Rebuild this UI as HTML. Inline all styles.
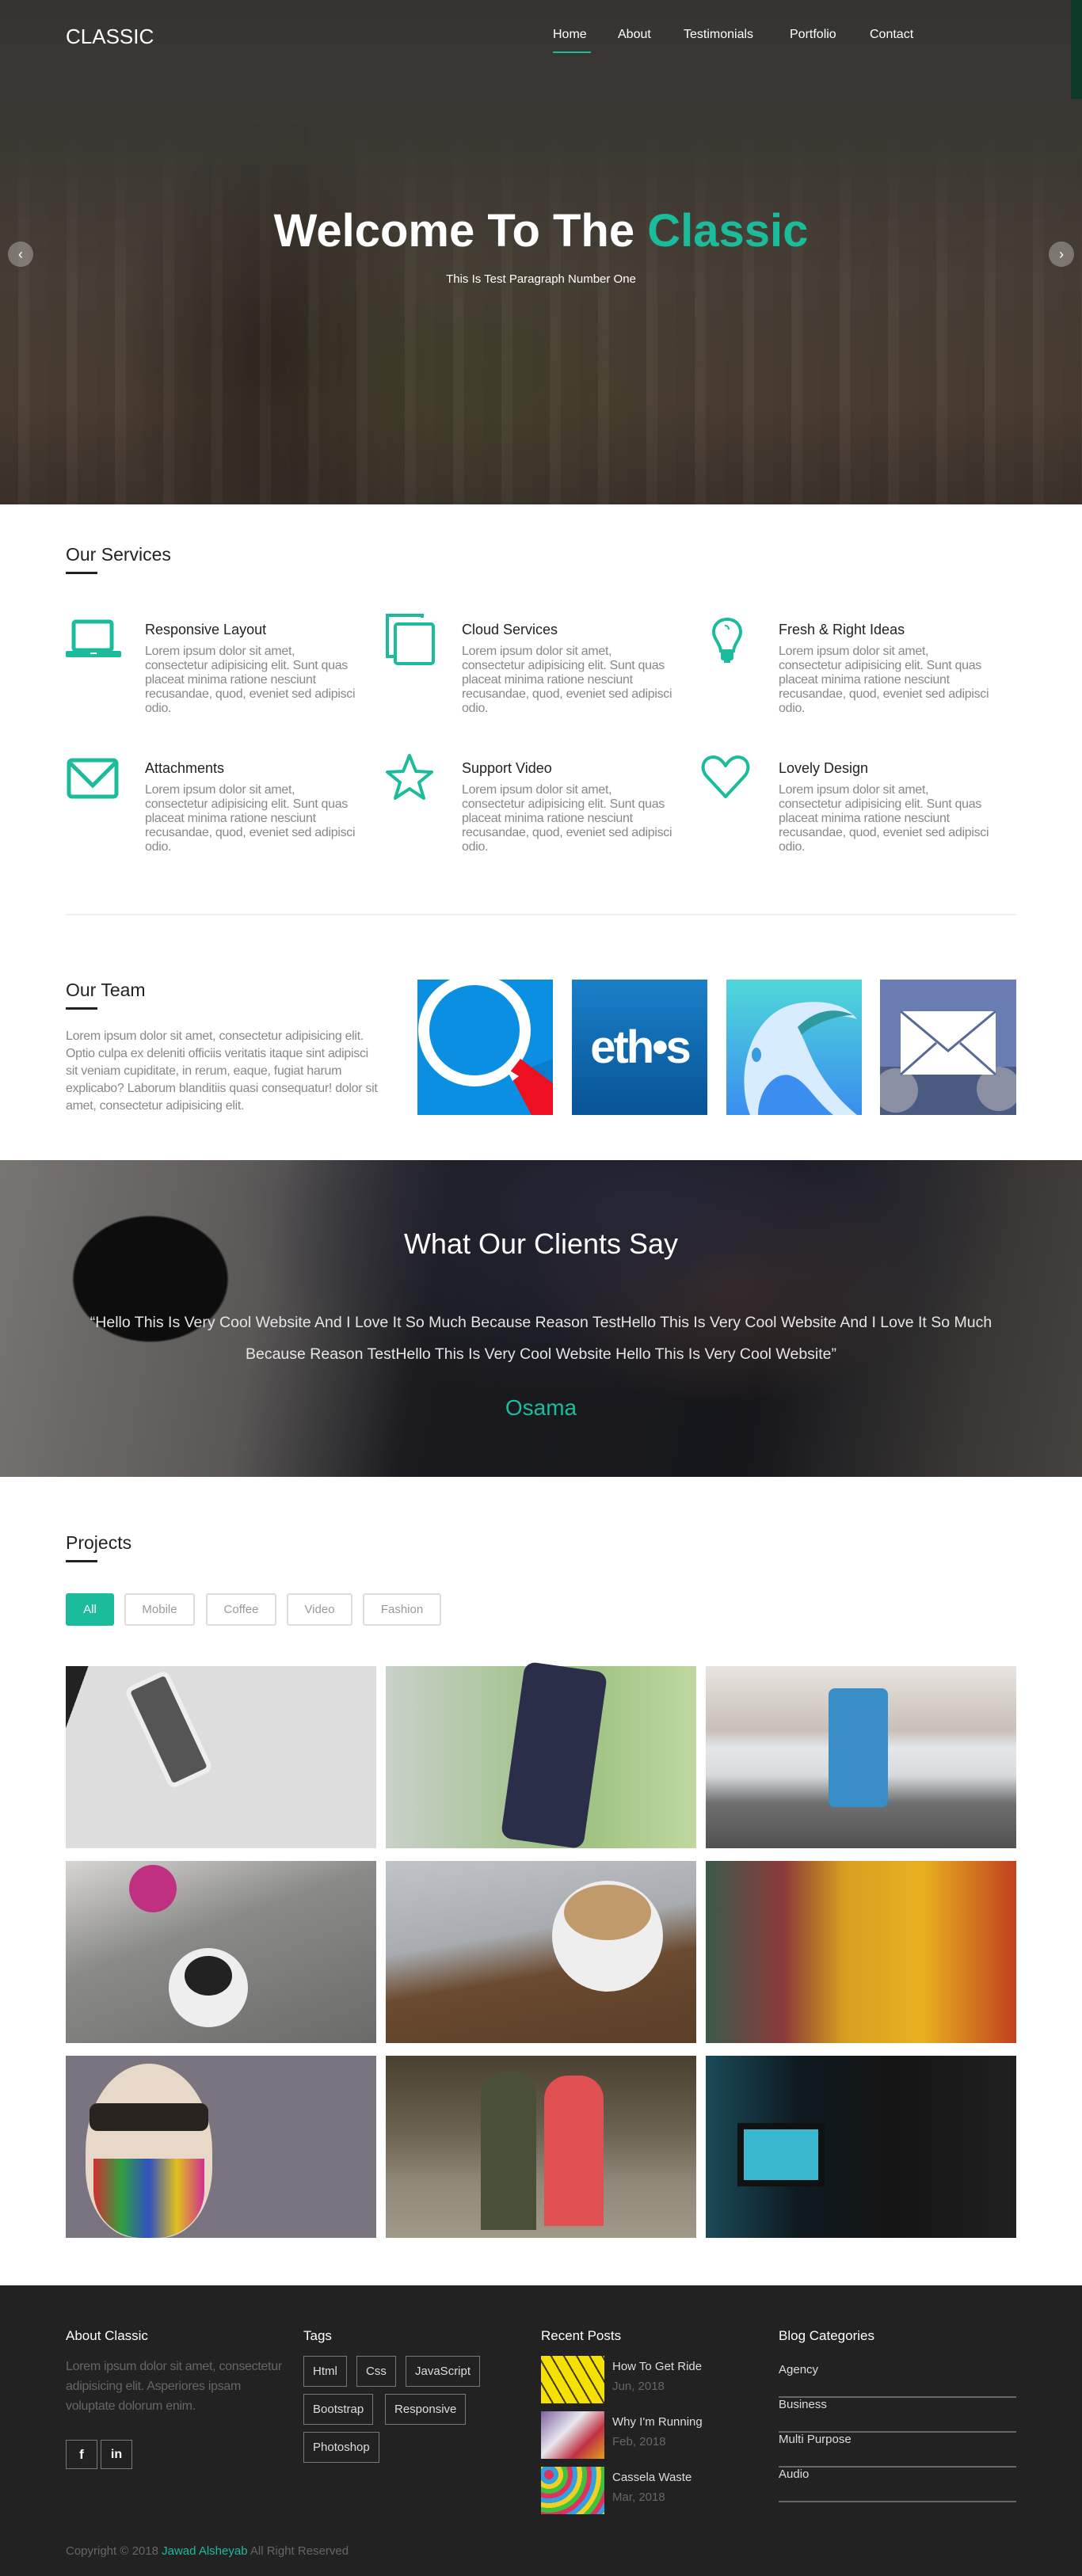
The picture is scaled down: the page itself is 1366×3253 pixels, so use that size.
<!DOCTYPE html>
<html><head><meta charset="utf-8">
<style>
*{margin:0;padding:0;box-sizing:border-box}
body{width:1366px;height:3253px;font-family:"Liberation Sans",Arial,sans-serif;background:#fff;position:relative;overflow:hidden}
.a{position:absolute}
.g{color:#1abc9c}
.hero{left:0;top:0;width:1366px;height:637px;background:
radial-gradient(ellipse 300px 200px at 600px 480px,rgba(60,70,40,.5),transparent),
radial-gradient(ellipse 200px 300px at 350px 450px,rgba(20,15,10,.5),transparent),
linear-gradient(180deg,#353432 0%,#3a3833 25%,#4a4137 55%,#4d3f33 80%,#3e342c 100%);}
.hero:after{content:"";position:absolute;left:0;right:0;top:0;bottom:0;background:repeating-linear-gradient(90deg,rgba(0,0,0,.08) 0 23px,rgba(255,255,255,.02) 23px 37px,rgba(0,0,0,.05) 37px 61px);-webkit-mask-image:linear-gradient(180deg,transparent 0,transparent 150px,#000 400px);mask-image:linear-gradient(180deg,transparent 0,transparent 150px,#000 400px)}
.nav{font-size:16px;color:#fff;top:35px}
.sh{font-size:23px;color:#222}
.ul{height:3px;width:40px;background:#222}
.st{font-size:18px;color:#222}
.sp{font-size:16px;color:#888;line-height:18px;width:330px;white-space:nowrap;letter-spacing:-.3px}
.btn{top:2012px;height:41px;border:2px solid #ddd;border-radius:3px;color:#999;font-size:15px;text-align:center;line-height:37px}
.im{width:392px;height:230px}
.fh{font-size:17px;color:#fff;top:2940px}
.tag{border:1px solid #777;color:#ddd;font-size:15px;height:39px;line-height:37px;padding:0 11px}
.cat{left:983px;width:300px;border-bottom:2px solid #666;color:#ddd;font-size:15px;height:44px}
</style></head><body>

<div class="a hero"></div>
<div class="a" style="left:1352px;top:0;width:14px;height:125px;background:#0e3a2a"></div>
<div class="a" style="left:83px;top:31px;font-size:26px;color:#fff">CLASSIC</div>
<div class="a nav g" style="left:698px">Home</div>
<div class="a" style="left:698px;top:65px;width:48px;height:2px;background:#1abc9c"></div>
<div class="a nav" style="left:780px">About</div>
<div class="a nav" style="left:863px">Testimonials</div>
<div class="a nav" style="left:997px">Portfolio</div>
<div class="a nav" style="left:1098px">Contact</div>
<div class="a" style="left:0;top:258px;width:1366px;text-align:center;font-size:58px;font-weight:bold;color:#fff">Welcome To The <span class="g">Classic</span></div>
<div class="a" style="left:0;top:344px;width:1366px;text-align:center;font-size:15px;color:#fff">This Is Test Paragraph Number One</div>
<div class="a" style="left:10px;top:305px;width:32px;height:32px;border-radius:50%;background:rgba(255,255,255,.3);color:#fff;text-align:center;line-height:32px;font-size:18px">‹</div>
<div class="a" style="left:1324px;top:305px;width:32px;height:32px;border-radius:50%;background:rgba(255,255,255,.3);color:#fff;text-align:center;line-height:32px;font-size:18px">›</div>

<div class="a sh" style="left:83px;top:687px">Our Services</div>
<div class="a ul" style="left:83px;top:722px"></div>

<svg class="a" style="left:83px;top:782px" width="70" height="50" viewBox="0 0 70 50"><rect x="10" y="3" width="48" height="36" rx="3" fill="none" stroke="#1abc9c" stroke-width="5"/><rect x="0" y="40" width="70" height="8" rx="2" fill="#1abc9c"/><rect x="31" y="42" width="8" height="2" fill="#fff"/></svg>
<svg class="a" style="left:485px;top:774px" width="66" height="66" viewBox="0 0 66 66"><path d="M48 6V3H4v52h8" fill="none" stroke="#1abc9c" stroke-width="4"/><rect x="14" y="14" width="48" height="50" rx="3" fill="none" stroke="#1abc9c" stroke-width="4"/></svg>
<svg class="a" style="left:898px;top:778px" width="40" height="62" viewBox="0 0 40 62"><path d="M20 4C9 4 3 12 3 20c0 9 8 14 9 24h16c1-10 9-15 9-24C37 12 31 4 20 4z" fill="none" stroke="#1abc9c" stroke-width="4"/><path d="M17 12c3 0 5 2 5 5" fill="none" stroke="#1abc9c" stroke-width="2"/><rect x="12" y="42" width="16" height="14" rx="3" fill="#1abc9c"/><rect x="16" y="55" width="8" height="4" fill="#1abc9c"/></svg>
<svg class="a" style="left:84px;top:957px" width="66" height="52" viewBox="0 0 66 52"><rect x="3" y="3" width="60" height="46" rx="4" fill="none" stroke="#1abc9c" stroke-width="5"/><path d="M5 7l28 28L61 7" fill="none" stroke="#1abc9c" stroke-width="5"/></svg>
<svg class="a" style="left:486px;top:950px" width="62" height="60" viewBox="0 0 62 60"><path d="M31 4l8 20 20 1-16 13 6 20-18-12-18 12 6-20L3 25l20-1z" fill="none" stroke="#1abc9c" stroke-width="4" stroke-linejoin="round"/></svg>
<svg class="a" style="left:884px;top:952px" width="64" height="58" viewBox="0 0 64 58"><path d="M32 54L8 28C0 19 3 5 16 4c8 0 13 6 16 11 3-5 8-11 16-11 13 1 16 15 8 24z" fill="none" stroke="#1abc9c" stroke-width="4" stroke-linejoin="round"/></svg>

<div class="a st" style="left:183px;top:785px">Responsive Layout</div>
<div class="a sp" style="left:183px;top:814px">Lorem ipsum dolor sit amet,<br>consectetur adipisicing elit. Sunt quas<br>placeat minima ratione nesciunt<br>recusandae, quod, eveniet sed adipisci<br>odio.</div>
<div class="a st" style="left:583px;top:785px">Cloud Services</div>
<div class="a sp" style="left:583px;top:814px">Lorem ipsum dolor sit amet,<br>consectetur adipisicing elit. Sunt quas<br>placeat minima ratione nesciunt<br>recusandae, quod, eveniet sed adipisci<br>odio.</div>
<div class="a st" style="left:983px;top:785px">Fresh &amp; Right Ideas</div>
<div class="a sp" style="left:983px;top:814px">Lorem ipsum dolor sit amet,<br>consectetur adipisicing elit. Sunt quas<br>placeat minima ratione nesciunt<br>recusandae, quod, eveniet sed adipisci<br>odio.</div>
<div class="a st" style="left:183px;top:960px">Attachments</div>
<div class="a sp" style="left:183px;top:989px">Lorem ipsum dolor sit amet,<br>consectetur adipisicing elit. Sunt quas<br>placeat minima ratione nesciunt<br>recusandae, quod, eveniet sed adipisci<br>odio.</div>
<div class="a st" style="left:583px;top:960px">Support Video</div>
<div class="a sp" style="left:583px;top:989px">Lorem ipsum dolor sit amet,<br>consectetur adipisicing elit. Sunt quas<br>placeat minima ratione nesciunt<br>recusandae, quod, eveniet sed adipisci<br>odio.</div>
<div class="a st" style="left:983px;top:960px">Lovely Design</div>
<div class="a sp" style="left:983px;top:989px">Lorem ipsum dolor sit amet,<br>consectetur adipisicing elit. Sunt quas<br>placeat minima ratione nesciunt<br>recusandae, quod, eveniet sed adipisci<br>odio.</div>

<div class="a" style="left:83px;top:1154px;width:1200px;height:2px;background:#eee"></div>

<div class="a sh" style="left:83px;top:1237px">Our Team</div>
<div class="a ul" style="left:83px;top:1272px"></div>
<div class="a" style="left:83px;top:1298px;width:440px;font-size:16px;line-height:22px;color:#888;white-space:nowrap;letter-spacing:-.3px">Lorem ipsum dolor sit amet, consectetur adipisicing elit.<br>Optio culpa ex deleniti officiis veritatis itaque sint adipisci<br>sit veniam cupiditate, in rerum, eaque, fugiat harum<br>explicabo? Laborum blanditiis quasi consequatur! dolor sit<br>amet, consectetur adipisicing elit.</div>

<svg class="a" style="left:527px;top:1237px" width="171" height="171" viewBox="0 0 171 171"><rect width="171" height="171" fill="#0b8fe2"/><path d="M120 120L171 171V100z" fill="#0a7ccd"/><circle cx="72" cy="64" r="64" fill="none" stroke="#fff" stroke-width="14"/><path d="M130 100l-14 18 28 53h27v-40z" fill="#ee1020"/><path d="M112 112l16 10-8 6z" fill="#fff"/></svg>
<div class="a" style="left:722px;top:1237px;width:171px;height:171px;background:linear-gradient(#1a80c8,#075396);color:#fff;font-weight:bold;font-size:58px;text-align:center;line-height:171px;letter-spacing:-3px">eth•s</div>
<svg class="a" style="left:917px;top:1237px" width="171" height="171" viewBox="0 0 171 171"><defs><linearGradient id="r" x1="0" y1="0" x2="0" y2="1"><stop offset="0" stop-color="#4fd8d8"/><stop offset="1" stop-color="#3a8ef0"/></linearGradient></defs><rect width="171" height="171" fill="url(#r)"/><path d="M30 171C10 120 30 40 90 30c30-5 60 0 75 20-30-10-60 0-70 20 10 20 20 60 70 101z" fill="#d8ecff"/><path d="M90 60c30-30 60-20 70-15-20 0-50 10-65 25z" fill="#2e9aa0"/><ellipse cx="38" cy="95" rx="6" ry="9" fill="#3a9ae0"/><path d="M40 171c0-30 20-55 40-50 20 5 30 30 55 50z" fill="#3a8ef0"/></svg>
<svg class="a" style="left:1111px;top:1237px" width="172" height="171" viewBox="0 0 172 171"><rect width="172" height="171" fill="#6a7db2"/><rect y="110" width="172" height="61" fill="#4a5a80"/><circle cx="20" cy="140" r="28" fill="#8a8fa4"/><circle cx="150" cy="138" r="28" fill="#8a8fa4"/><rect x="26" y="40" width="120" height="80" fill="#fff"/><path d="M26 40l60 50 60-50M26 120l45-40M146 120l-45-40" fill="none" stroke="#5a6a98" stroke-width="3"/></svg>

<div class="a" style="left:0;top:1465px;width:1366px;height:400px;background:
radial-gradient(ellipse 160px 130px at 190px 150px,#151515 60%,transparent 62%),
radial-gradient(ellipse 500px 250px at 800px 60px,#3a3a55,transparent),
radial-gradient(ellipse 250px 160px at 920px 150px,rgba(170,110,60,.5),transparent),
linear-gradient(100deg,#b8b4b0 0%,#8a8684 25%,#2a2a30 40%,#22232a 70%,#5a5552 90%,#6a6560 100%)"></div>
<div class="a" style="left:0;top:1465px;width:1366px;height:400px;background:rgba(0,0,0,.35)"></div>
<div class="a" style="left:0;top:1550px;width:1366px;text-align:center;font-size:36px;color:#fff">What Our Clients Say</div>
<div class="a" style="left:0;top:1650px;width:1366px;text-align:center;font-size:19.5px;line-height:40px;color:#e6e6e6;white-space:nowrap">“Hello This Is Very Cool Website And I Love It So Much Because Reason TestHello This Is Very Cool Website And I Love It So Much<br>Because Reason TestHello This Is Very Cool Website Hello This Is Very Cool Website”</div>
<div class="a g" style="left:0;top:1762px;width:1366px;text-align:center;font-size:28px">Osama</div>

<div class="a sh" style="left:83px;top:1935px">Projects</div>
<div class="a ul" style="left:83px;top:1970px"></div>
<div class="a btn" style="left:83px;width:61px;background:#1abc9c;border-color:#1abc9c;color:#fff">All</div>
<div class="a btn" style="left:157px;width:89px">Mobile</div>
<div class="a btn" style="left:260px;width:89px">Coffee</div>
<div class="a btn" style="left:362px;width:83px">Video</div>
<div class="a btn" style="left:458px;width:99px">Fashion</div>

<div class="a im" style="left:83px;top:2104px;background:linear-gradient(110deg,#222 0 6%,#ddd 6% 100%)"><div class="a" style="left:100px;top:10px;width:60px;height:140px;background:#555;border:6px solid #eee;border-radius:10px;transform:rotate(-25deg)"></div></div>
<div class="a im" style="left:487px;top:2104px;background:linear-gradient(90deg,#c8d0c8,#9ac080 60%,#c0d8a0)"><div class="a" style="left:160px;top:0;width:105px;height:225px;background:#2a2e48;border-radius:14px;transform:rotate(8deg)"></div></div>
<div class="a im" style="left:891px;top:2104px;background:linear-gradient(180deg,#e8e4e0 0%,#c8c0b8 35%,#e4e6ea 45%,#d8dade 60%,#707070 75%,#505050 100%)"><div class="a" style="left:155px;top:28px;width:75px;height:150px;background:#3a8ec8;border-radius:8px"></div></div>
<div class="a im" style="left:83px;top:2350px;background:linear-gradient(160deg,#d8d6d4 0%,#8a8a88 40%,#6a6a68 100%)"><div class="a" style="left:130px;top:110px;width:100px;height:100px;border-radius:50%;background:#eee"></div><div class="a" style="left:150px;top:120px;width:60px;height:50px;border-radius:50%;background:#222"></div><div class="a" style="left:80px;top:5px;width:60px;height:60px;border-radius:50%;background:#c03080"></div></div>
<div class="a im" style="left:487px;top:2350px;background:linear-gradient(170deg,#c0c4c8 0%,#a8acb0 40%,#6a4a30 60%,#5a3e28 100%)"><div class="a" style="left:210px;top:25px;width:140px;height:140px;border-radius:50%;background:#eee"></div><div class="a" style="left:225px;top:30px;width:110px;height:70px;border-radius:50%;background:#c09a6a"></div></div>
<div class="a im" style="left:891px;top:2350px;background:linear-gradient(90deg,#3a5a4a 0%,#8a3a3a 25%,#d8a020 45%,#e8b020 70%,#c04020 100%)"></div>
<div class="a im" style="left:83px;top:2596px;background:#7a7480"><div class="a" style="left:25px;top:10px;width:160px;height:220px;border-radius:50% 50% 40% 40%;background:#e8d8c8"></div><div class="a" style="left:35px;top:130px;width:140px;height:100px;background:linear-gradient(90deg,#d03030,#30a040,#3050c0,#e0c020,#d03090);border-radius:0 0 60px 60px"></div><div class="a" style="left:30px;top:60px;width:150px;height:35px;background:#2a2420;border-radius:10px"></div></div>
<div class="a im" style="left:487px;top:2596px;background:linear-gradient(180deg,#4a4030 0%,#6a6050 40%,#908878 70%,#a09888 100%)"><div class="a" style="left:120px;top:20px;width:70px;height:200px;background:#4a5038;border-radius:30px 30px 0 0"></div><div class="a" style="left:200px;top:25px;width:75px;height:190px;background:#e05050;border-radius:30px 30px 0 0"></div></div>
<div class="a im" style="left:891px;top:2596px;background:linear-gradient(90deg,#1a4a58 0%,#0e1a20 30%,#141414 60%,#202020 100%)"><div class="a" style="left:40px;top:85px;width:110px;height:80px;background:#3ab8d0;border:8px solid #111"></div></div>

<div class="a" style="left:0;top:2886px;width:1366px;height:367px;background:#222"></div>
<div class="a fh" style="left:83px">About Classic</div>
<div class="a" style="left:83px;top:2976px;width:300px;font-size:16px;line-height:25px;color:#666;white-space:nowrap;letter-spacing:-.3px">Lorem ipsum dolor sit amet, consectetur<br>adipisicing elit. Asperiores ipsam<br>voluptate dolorum enim.</div>
<div class="a" style="left:83px;top:3081px;width:40px;height:37px;border:1px solid #777;color:#fff;text-align:center;line-height:35px;font-weight:bold;font-size:17px">f</div>
<div class="a" style="left:127px;top:3081px;width:40px;height:37px;border:1px solid #777;color:#fff;text-align:center;line-height:35px;font-weight:bold;font-size:16px">in</div>

<div class="a fh" style="left:383px">Tags</div>
<div class="a tag" style="left:383px;top:2975px">Html</div>
<div class="a tag" style="left:450px;top:2975px">Css</div>
<div class="a tag" style="left:512px;top:2975px">JavaScript</div>
<div class="a tag" style="left:383px;top:3023px">Bootstrap</div>
<div class="a tag" style="left:486px;top:3023px">Responsive</div>
<div class="a tag" style="left:383px;top:3071px">Photoshop</div>

<div class="a fh" style="left:683px">Recent Posts</div>
<div class="a" style="left:683px;top:2975px;width:80px;height:60px;background:#f5e000;background-image:repeating-linear-gradient(60deg,transparent 0 12px,#3a3a10 12px 14px)"></div>
<div class="a" style="left:773px;top:2980px;color:#ddd;font-size:15px">How To Get Ride</div>
<div class="a" style="left:773px;top:3005px;color:#666;font-size:15px">Jun, 2018</div>
<div class="a" style="left:683px;top:3045px;width:80px;height:60px;background:linear-gradient(135deg,#8060a0,#e8e8f0 40%,#c03040 70%,#e0a020)"></div>
<div class="a" style="left:773px;top:3050px;color:#ddd;font-size:15px">Why I'm Running</div>
<div class="a" style="left:773px;top:3075px;color:#666;font-size:15px">Feb, 2018</div>
<div class="a" style="left:683px;top:3115px;width:80px;height:60px;background:repeating-radial-gradient(circle at 10px 10px,#e03060 0 6px,#30a0e0 6px 12px,#f0d020 12px 18px,#40c040 18px 24px)"></div>
<div class="a" style="left:773px;top:3120px;color:#ddd;font-size:15px">Cassela Waste</div>
<div class="a" style="left:773px;top:3145px;color:#666;font-size:15px">Mar, 2018</div>

<div class="a fh" style="left:983px">Blog Categories</div>
<div class="a cat" style="top:2984px">Agency</div>
<div class="a cat" style="top:3028px">Business</div>
<div class="a cat" style="top:3072px">Multi Purpose</div>
<div class="a cat" style="top:3116px">Audio</div>

<div class="a" style="left:83px;top:3213px;font-size:15px;color:#666">Copyright © 2018 <span class="g">Jawad Alsheyab</span> All Right Reserved</div>
</body></html>
